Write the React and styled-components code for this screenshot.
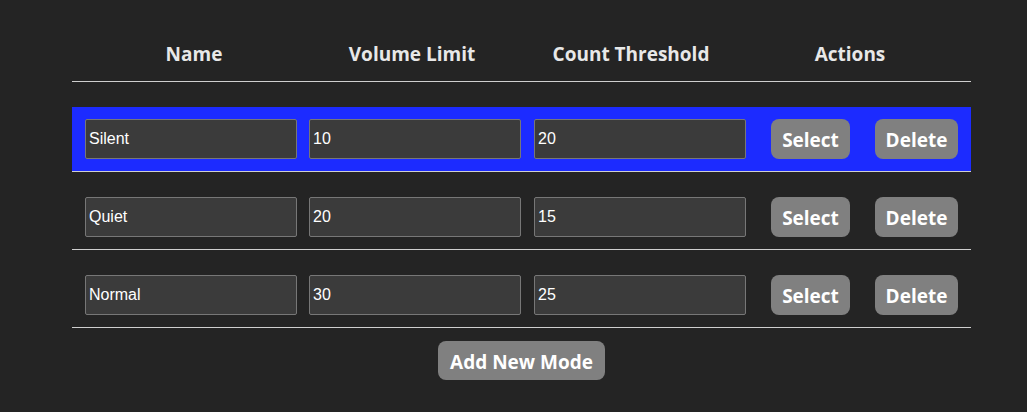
import React from "react";
import styled, { createGlobalStyle } from "styled-components";

const Global = createGlobalStyle`
  html, body { margin: 0; padding: 0; background: #242424; }
  body { font-family: "Open Sans", "Noto Sans", sans-serif; color: #e6e6e6; }
`;

const Page = styled.div`
  width: 1027px;
  height: 412px;
  box-sizing: border-box;
  padding: 28px 56px 0 72px;
  display: flex;
  flex-direction: column;
  align-items: stretch;
`;

const HeaderRow = styled.div`
  display: grid;
  grid-template-columns: 244px 192px 246px 192px 1fr;
  height: 53px;
  border-bottom: 1px solid #cfcfcf;
  align-items: center;
  margin-bottom: 25px;
`;

const HeadCell = styled.div`
  text-align: center;
  font-weight: 700;
  font-size: 19px;
  color: #e8e8e8;
  padding-bottom: 1px;
`;

const Row = styled.div`
  display: flex;
  align-items: center;
  padding: 0 13px;
  height: 64px;
  background: ${(p) => (p.$active ? "#1c2bff" : "transparent")};
  border-bottom: 1px solid #cfcfcf;
  margin-bottom: 13px;
`;

const Field = styled.input`
  box-sizing: border-box;
  flex: 0 0 212px;
  width: 212px;
  height: 40px;
  margin: 0 0 0 ${(p) => p.$gap || 0}px;
  padding: 0 3px;
  background: #3b3b3b;
  border: 1px solid #777777;
  border-radius: 2px;
  color: #ffffff;
  font-family: "Liberation Sans", Arial, sans-serif;
  font-size: 16px;
  outline: none;
`;

const Button = styled.button`
  box-sizing: border-box;
  height: 40px;
  border: none;
  border-radius: 8px;
  background: #808080;
  color: #ffffff;
  font-family: "Open Sans", "Noto Sans", sans-serif;
  font-weight: 700;
  font-size: 19px;
  padding: 2px 0 0;
  cursor: pointer;
  flex: 0 0 auto;
  width: ${(p) => p.$w}px;
  margin-left: ${(p) => p.$gap || 0}px;
`;

const Footer = styled.div`
  display: flex;
  justify-content: center;
`;

const AddButton = styled(Button)`
  width: 167px;
  height: 39px;
`;

const modes = [
  { name: "Silent", vol: "10", count: "20", active: true },
  { name: "Quiet", vol: "20", count: "15" },
  { name: "Normal", vol: "30", count: "25" },
];

export default function App() {
  return (
    <>
      <Global />
      <Page>
        <HeaderRow>
          <HeadCell>Name</HeadCell>
          <HeadCell>Volume Limit</HeadCell>
          <HeadCell>Count Threshold</HeadCell>
          <HeadCell>Actions</HeadCell>
          <div />
        </HeaderRow>
        {modes.map((m) => (
          <Row key={m.name} $active={m.active}>
            <Field defaultValue={m.name} />
            <Field defaultValue={m.vol} $gap={12} />
            <Field defaultValue={m.count} $gap={13} />
            <Button $w={79} $gap={25}>Select</Button>
            <Button $w={83} $gap={25}>Delete</Button>
          </Row>
        ))}
        <Footer>
          <AddButton>Add New Mode</AddButton>
        </Footer>
      </Page>
    </>
  );
}
